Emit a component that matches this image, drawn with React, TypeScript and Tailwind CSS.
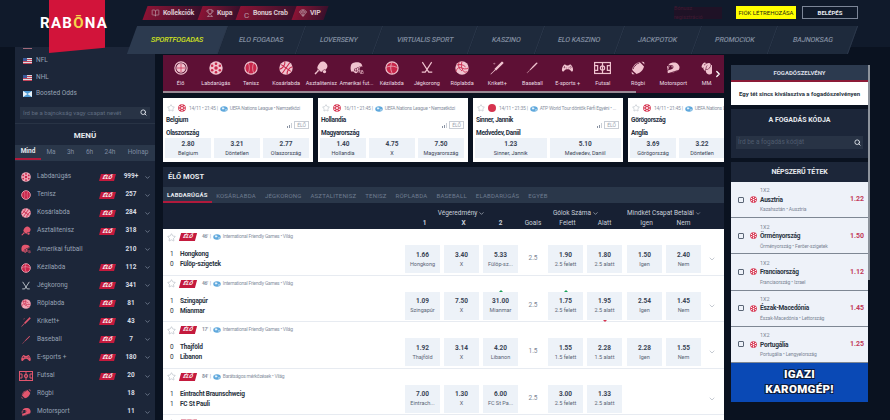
import React from 'react';
import { Search, ChevronDown, ChevronRight, Star, BookOpen, Trophy, Gem } from 'lucide-react';
import {
  GiPingPongBat,
  GiAmericanFootballHelmet,
  GiCricketBat,
  GiBaseballBat,
  GiGamepad,
  GiAmericanFootballBall,
  GiFullMotorcycleHelmet,
  GiBoxingGlove,
} from 'react-icons/gi';

type IconProps = { className?: string; pattern?: string };

const SoccerIcon = ({ className, pattern = '#c8264a' }: IconProps) => (
  <svg viewBox="0 0 24 24" className={className}>
    <circle cx="12" cy="12" r="11.5" fill="currentColor" />
    <g fill={pattern}>
      <circle cx="12" cy="12" r="3" />
      <circle cx="12" cy="4.6" r="2.2" />
      <circle cx="12" cy="19.4" r="2.2" />
      <circle cx="5.4" cy="8.2" r="2.2" />
      <circle cx="18.6" cy="8.2" r="2.2" />
      <circle cx="5.4" cy="15.8" r="2.2" />
      <circle cx="18.6" cy="15.8" r="2.2" />
    </g>
  </svg>
);

const TennisIcon = ({ className, pattern = '#c8264a' }: IconProps) => (
  <svg viewBox="0 0 24 24" className={className}>
    <circle cx="12" cy="12" r="10.5" fill={pattern} stroke="currentColor" strokeWidth="2" />
    <path d="M7 3c3 5 3 13 0 18M17 3c-3 5-3 13 0 18" fill="none" stroke="currentColor" strokeWidth="1" />
  </svg>
);

const BasketIcon = ({ className, pattern = '#c8264a' }: IconProps) => (
  <svg viewBox="0 0 24 24" className={className}>
    <circle cx="12" cy="12" r="11.5" fill="currentColor" />
    <path d="M2 12h20M12 1v22M4 4c4 4 4 12 0 16M20 4c-4 4-4 12 0 16" fill="none" stroke={pattern} strokeWidth="1.8" transform="rotate(35 12 12)" />
  </svg>
);

const HandIcon = ({ className, pattern = '#c8264a' }: IconProps) => (
  <svg viewBox="0 0 24 24" className={className}>
    <circle cx="12" cy="12" r="10.5" fill={pattern} stroke="currentColor" strokeWidth="2" />
    <path d="M2 11c6-3 14-3 20 1M12 2c-3 6-3 14 1 20" fill="none" stroke="currentColor" strokeWidth="1.2" />
  </svg>
);

const VolleyIcon = ({ className, pattern = '#c8264a' }: IconProps) => (
  <svg viewBox="0 0 24 24" className={className}>
    <circle cx="12" cy="12" r="11.5" fill="currentColor" />
    <path d="M12 1c-2 6-1 10 0 11s6 3 11 0M12 12c-5-2-9 0-10 6M12 12c1 5 4 9 9 6M7 2c-2 6 0 12 5 15M3 7c5-2 11-1 15 3" fill="none" stroke={pattern} strokeWidth="1.5" />
  </svg>
);

const HockeyIcon = ({ className }: IconProps) => (
  <svg viewBox="0 0 24 24" className={className} fill="none" stroke="currentColor" strokeWidth="2">
    <path d="M4 2l11 17h6M20 2L9 19H3" />
  </svg>
);

const FieldIcon = ({ className }: IconProps) => (
  <svg viewBox="0 0 28 20" className={className} fill="none" stroke="currentColor" strokeWidth="2">
    <rect x="1" y="1" width="26" height="18" />
    <path d="M14 1v18M1 6h5v8H1M27 6h-5v8h5" />
    <circle cx="14" cy="10" r="3.5" />
  </svg>
);

const LiveIcon = ({ className }: IconProps) => (
  <svg viewBox="0 0 24 24" className={className} fill="none" stroke="currentColor" strokeWidth="2">
    <circle cx="12" cy="12" r="10.5" />
    <circle cx="12" cy="12" r="7" fill="currentColor" />
    <path d="M5 12h14M12 5v14" stroke="#c8264a" strokeWidth="1.2" />
  </svg>
);

const icons: Record<string, React.ComponentType<IconProps>> = {
  live: LiveIcon,
  soccer: SoccerIcon,
  tennis: TennisIcon,
  basket: BasketIcon,
  table: GiPingPongBat,
  helmet: GiAmericanFootballHelmet,
  hand: HandIcon,
  hockey: HockeyIcon,
  volley: VolleyIcon,
  cricket: GiCricketBat,
  baseball: GiBaseballBat,
  esports: GiGamepad,
  field: FieldIcon,
  rugby: GiAmericanFootballBall,
  motor: GiFullMotorcycleHelmet,
  mma: GiBoxingGlove,
};

const stripSports = [
  ['Élő', 'live'],
  ['Labdarúgás', 'soccer'],
  ['Tenisz', 'tennis'],
  ['Kosárlabda', 'basket'],
  ['Asztalitenisz', 'table'],
  ['Amerikai fut...', 'helmet'],
  ['Kézilabda', 'hand'],
  ['Jégkorong', 'hockey'],
  ['Röplabda', 'volley'],
  ['Krikett+', 'cricket'],
  ['Baseball', 'baseball'],
  ['E-sports +', 'esports'],
  ['Futsal', 'field'],
  ['Rögbi', 'rugby'],
  ['Motorsport', 'motor'],
  ['MMA', 'mma'],
];

const menuSports = [
  { name: 'Labdarúgás', icon: 'soccer', live: true, count: '999+' },
  { name: 'Tenisz', icon: 'tennis', live: true, count: '257' },
  { name: 'Kosárlabda', icon: 'basket', live: true, count: '284' },
  { name: 'Asztalitenisz', icon: 'table', live: true, count: '318' },
  { name: 'Amerikai futball', icon: 'helmet', live: false, count: '210' },
  { name: 'Kézilabda', icon: 'hand', live: true, count: '112' },
  { name: 'Jégkorong', icon: 'hockey', live: true, count: '341' },
  { name: 'Röplabda', icon: 'volley', live: true, count: '81' },
  { name: 'Krikett+', icon: 'cricket', live: true, count: '43' },
  { name: 'Baseball', icon: 'baseball', live: true, count: '7' },
  { name: 'E-sports +', icon: 'esports', live: true, count: '180' },
  { name: 'Futsal', icon: 'field', live: true, count: '20' },
  { name: 'Rögbi', icon: 'rugby', live: false, count: '18' },
  { name: 'Motorsport', icon: 'motor', live: false, count: '11' },
];

const navTabs = [
  { label: 'SPORTFOGADAS', width: 'w-[91px]' },
  { label: 'ELO FOGADAS', width: 'w-[78px]' },
  { label: 'LOVERSENY', width: 'w-[77px]' },
  { label: 'VIRTUALIS SPORT', width: 'w-[95px]' },
  { label: 'KASZINO', width: 'w-[67px]' },
  { label: 'ELO KASZINO', width: 'w-[80px]' },
  { label: 'JACKPOTOK', width: 'w-[77px]' },
  { label: 'PROMOCIOK', width: 'w-[76px]' },
  { label: 'BAJNOKSAG', width: 'w-[80px]' },
];

const featured = [
  {
    sport: 'soccer',
    meta: '14/11 • 21:45 | ',
    league: 'UEFA Nations League • Nemzetközi',
    teams: ['Belgium', 'Olaszország'],
    odds: [['2.80', 'Belgium'], ['3.21', 'Döntetlen'], ['2.77', 'Olaszország']],
  },
  {
    sport: 'soccer',
    meta: '16/11 • 21:45 | ',
    league: 'UEFA Nations League • Nemzetközi',
    teams: ['Hollandia', 'Magyarország'],
    odds: [['1.40', 'Hollandia'], ['4.75', 'X'], ['7.50', 'Magyarország']],
  },
  {
    sport: 'tennis',
    meta: '14/11 • 21:35 | ',
    league: 'ATP World Tour döntők Férfi Egyéni • ...',
    teams: ['Sinner, Jannik', 'Medvedev, Daniil'],
    odds: [['1.23', 'Sinner, Jannik'], ['5.10', 'Medvedev, Daniil']],
  },
  {
    sport: 'soccer',
    meta: '14/11 • 21:45 | ',
    league: 'UEFA Nations League',
    teams: ['Görögország', 'Anglia'],
    odds: [['3.69', 'Görögország'], ['3.22', 'Döntetlen']],
  },
];

const liveTabs = ['LABDARÚGÁS', 'KOSÁRLABDA', 'JÉGKORONG', 'ASZTALITENISZ', 'TENISZ', 'RÖPLABDA', 'BASEBALL', 'ELABDARÚGÁS', 'EGYÉB'];

type Odd = { value: string; label: string; up?: boolean; down?: boolean };
type Match = {
  minute: string;
  league: string;
  home: [string, string];
  away: [string, string];
  result: Odd[];
  goals: string;
  total: Odd[];
  both: Odd[];
};

const matches: Match[] = [
  {
    minute: "46'",
    league: 'International Friendly Games • Világ',
    home: ['1', 'Hongkong'],
    away: ['0', 'Fülöp-szigetek'],
    result: [{ value: '1.66', label: 'Hongkong' }, { value: '3.40', label: 'X' }, { value: '5.33', label: 'Fülöp-sz...' }],
    goals: '2.5',
    total: [{ value: '1.90', label: '2.5 felett' }, { value: '1.80', label: '2.5 alatt' }],
    both: [{ value: '1.50', label: 'Igen' }, { value: '2.40', label: 'Nem' }],
  },
  {
    minute: "46'",
    league: 'International Friendly Games • Világ',
    home: ['1', 'Szingapúr'],
    away: ['0', 'Mianmar'],
    result: [{ value: '1.09', label: 'Szingapúr' }, { value: '7.50', label: 'X' }, { value: '31.00', label: 'Mianmar', up: true }],
    goals: '2.5',
    total: [{ value: '1.75', label: '2.5 felett', up: true }, { value: '1.95', label: '2.5 alatt', down: true }],
    both: [{ value: '2.54', label: 'Igen' }, { value: '1.45', label: 'Nem' }],
  },
  {
    minute: "17'",
    league: 'International Friendly Games • Világ',
    home: ['0', 'Thajföld'],
    away: ['0', 'Libanon'],
    result: [{ value: '1.92', label: 'Thajföld' }, { value: '3.14', label: 'X' }, { value: '4.20', label: 'Libanon' }],
    goals: '1.5',
    total: [{ value: '1.55', label: '1.5 felett' }, { value: '2.28', label: '1.5 alatt' }],
    both: [{ value: '2.28', label: 'Igen' }, { value: '1.55', label: 'Nem' }],
  },
  {
    minute: "84'",
    league: 'Barátságos mérkőzések • Világ',
    home: ['1', 'Eintracht Braunschweig'],
    away: ['1', 'FC St Pauli'],
    result: [{ value: '7.00', label: 'Eintrach...' }, { value: '1.30', label: 'X' }, { value: '6.00', label: 'FC St Pa...' }],
    goals: '2.5',
    total: [{ value: '3.00', label: '2.5 felett' }, { value: '1.33', label: '2.5 alatt' }],
    both: [],
  },
];

const popular = [
  { name: 'Ausztria', sub: 'Kazahsztán • Ausztria', odd: '1.22' },
  { name: 'Örményország', sub: 'Örményország • Feröer-szigetek', odd: '1.50' },
  { name: 'Franciaország', sub: 'Franciaország • Izrael', odd: '1.12' },
  { name: 'Észak-Macedónia', sub: 'Észak-Macedónia • Lettország', odd: '1.45' },
  { name: 'Portugália', sub: 'Portugália • Lengyelország', odd: '1.25' },
];

const LiveBadge = ({ className }: { className?: string }) => (
  <span className={`flex h-[7px] w-[15px] -skew-x-[15deg] items-center justify-center bg-[#c41a3d] text-[5.5px] font-bold italic leading-none text-white ${className ?? ''}`}>
    ÉLŐ
  </span>
);

const Globe = () => (
  <svg viewBox="0 0 16 12" className="h-[6px] w-[8px] shrink-0">
    <ellipse cx="8" cy="6" rx="7.5" ry="5.5" fill="#5fa8dc" />
    <path d="M3 3h5l1 3-4 1zM10 7h4l-2 3z" fill="#e8f2fa" />
  </svg>
);

const FlagUs = () => (
  <svg viewBox="0 0 18 12" className="h-[6px] w-[9px] shrink-0">
    <rect width="18" height="12" fill="#d9dde3" />
    <path d="M0 2h18v2H0zM0 6h18v2H0zM0 10h18v2H0z" fill="#c2455a" />
    <rect width="8" height="6" fill="#3b5a9a" />
  </svg>
);

const FlagBoost = () => (
  <svg viewBox="0 0 18 12" className="h-[6px] w-[9px] shrink-0">
    <rect width="18" height="12" fill="#4f9bd6" />
    <path d="M0 0l9 6-9 6zM18 0L9 6l9 6z" fill="#e8f2fa" />
  </svg>
);

const SidebarRow = ({ name, icon, live, count }: (typeof menuSports)[number]) => {
  const Icon = icons[icon];
  const wide = icon === 'field' || icon === 'esports';
  const balls = ['soccer', 'tennis', 'basket', 'hand', 'volley'];
  const color = icon === 'hockey' ? 'text-[#d3d8df]' : balls.includes(icon) ? 'text-[#f0a8b8]' : 'text-[#e2566e]';
  return (
    <div className="flex h-[18.1px] items-center">
      <div className="flex w-[22px] justify-center">
        <Icon className={`${wide ? 'h-[12px] w-[14px]' : 'h-[10px] w-[10px]'} ${color}`} />
      </div>
      <span className="flex-1 text-[6.5px] text-[#98a3b5]">{name}</span>
      {live && <LiveBadge className="mr-[1px]" />}
      <span className="w-[28px] pl-[2px] text-center text-[6.5px] font-bold text-[#d9dde4]">{count}</span>
      <ChevronDown className="mr-[4px] h-[7px] w-[7px] text-[#9aa5b8]" />
    </div>
  );
};

const Sidebar = () => (
  <aside className="ml-[15px] w-[140px] shrink-0 bg-[#1c2639] pt-[4px]">
    <div className="-mt-[3px] mb-[4px] ml-[8px] h-[1px] w-[9px] bg-[#a06a7a]" />
    {[
      ['NFL', <FlagUs key="a" />],
      ['NHL', <FlagUs key="b" />],
      ['Boosted Odds', <FlagBoost key="c" />],
    ].map(([name, flag], i) => (
      <div key={i} className="flex h-[16.5px] items-center gap-[4px] pl-[8px] text-[6.5px] text-[#98a3b5]">
        {flag}
        <span>{name}</span>
      </div>
    ))}
    <div className="px-[5px] pt-[4px]">
      <div className="flex h-[12.5px] items-center justify-between bg-[#283345] pl-[3px] pr-[3px]">
        <span className="text-[6px] text-[#5f6c80]">Írd be a bajnokság vagy csapat nevét</span>
        <Search className="h-[7px] w-[7px] text-[#e4e8ee]" strokeWidth={3} />
      </div>
    </div>
    <div className="mt-[4px] border-t border-[#283345] pt-[5px] text-center text-[8px] font-bold leading-[14px] text-[#e6e9ee]">MENÜ</div>
    <div className="mt-[2px] flex h-[16px] border-b border-transparent bg-[#2a374a] text-[6.5px] text-[#7f8ba0]">
      <span className="flex w-[26px] items-center justify-center border-b-2 border-[#b01a3c] font-bold text-[#e6e9ee]">Mind</span>
      <span className="flex w-[20px] items-center justify-center">Ma</span>
      <span className="flex w-[19px] items-center justify-center">3h</span>
      <span className="flex w-[19px] items-center justify-center">6h</span>
      <span className="flex w-[22px] items-center justify-center">24h</span>
      <span className="flex flex-1 items-center justify-center">Holnap</span>
    </div>
    <div className="pt-[7px]">
      {menuSports.map((s) => (
        <SidebarRow key={s.name} {...s} />
      ))}
    </div>
  </aside>
);

const Header = () => (
  <header className="relative z-10 h-[55px]">
    <div className="absolute left-[49px] top-0 h-[53px] w-[56px] bg-[#d2143a] [clip-path:polygon(0_0,100%_0,100%_90%,0_100%)]" />
    <div className="absolute left-[40px] top-[14px] text-[15px] font-bold leading-[18px] tracking-[1.3px] text-white">
      RAB<span className="text-[#f4d44a]">Ō</span>NA
    </div>
    <div className="flex h-[26px] items-center pl-[145px] pb-[1px]">
      {[
        { label: 'Kollekciók', icon: <BookOpen className="h-[8px] w-[9px]" />, width: 'w-[55px]' },
        { label: 'Kupa', icon: <Trophy className="h-[8px] w-[8px]" />, width: 'w-[38px]' },
        { label: 'Bonus Crab', icon: <span className="text-[8px] leading-none">C</span>, width: 'w-[56px]' },
        { label: 'VIP', icon: <Gem className="h-[8px] w-[8px]" />, width: 'w-[32px]' },
      ].map((l) => (
        <div key={l.label} className={`flex h-[14px] ${l.width} -skew-x-[20deg] items-center justify-center gap-[3px] bg-gradient-to-r from-[#8b1234] to-[#3b0f2b] text-[#d9c7cf]`}>
          <span className="skew-x-[20deg] text-[#b99aa6]">{l.icon}</span>
          <span className="skew-x-[20deg] text-[7px] font-bold tracking-[-0.15px]">{l.label}</span>
        </div>
      ))}
      <div className="ml-auto flex items-center pr-[32px]">
        <div className="mr-[14px] flex h-[12px] w-[48px] items-center justify-center bg-[#1f1226] text-[5.5px] text-[#3f1b33]">Bónusz regisztráció</div>
        <div className="mr-[6px] flex h-[13px] w-[60px] items-center justify-center bg-[#ffff00] text-[6px] text-[#2a2a10]">FIÓK LÉTREHOZÁSA</div>
        <div className="flex h-[13px] w-[56px] items-center justify-center border border-[#7c8698] text-[6px] font-bold text-[#e6e9ee]">BELÉPÉS</div>
      </div>
    </div>
    <nav className="flex h-[28px] pl-[132px]">
      {navTabs.map((t, i) => (
        <div
          key={t.label}
          className={`flex ${t.width} -skew-x-[20deg] items-center justify-center border-r border-[#2c384b] ${i === 0 ? 'bg-[#2c3a4f]' : 'bg-[#1e2a3c]'}`}
        >
          <span className={`inline-block skew-x-[8deg] text-[7px] font-medium tracking-[-0.1px] ${i === 0 ? 'text-[#cfe01f]' : 'text-[#808c9f]'}`}>{t.label}</span>
        </div>
      ))}
    </nav>
  </header>
);

const SportStrip = () => (
  <div className="relative flex h-[38px] bg-[#5e1035]">
    {stripSports.map(([label, icon]) => {
      const Icon = icons[icon];
      const wide = icon === 'field' || icon === 'esports';
      return (
        <div key={label} className="flex w-[35.2px] shrink-0 flex-col items-center pt-[5px]">
          <div className="flex h-[16px] items-center">
            <Icon className={`${wide ? 'h-[14px] w-[17px]' : 'h-[14px] w-[14px]'} text-[#f0c3cf]`} />
          </div>
          <span className="mt-[3px] whitespace-nowrap text-[5.5px] leading-[8px] text-[#eadde3]">{label}</span>
        </div>
      );
    })}
    <div className="absolute bottom-0 left-0 h-[2px] w-[473px] bg-[#9a8a96]" />
    <div className="absolute bottom-0 right-0 top-0 flex w-[12px] items-center justify-center bg-[#5e1035]">
      <ChevronRight className="h-[10px] w-[10px] text-white" strokeWidth={3} />
    </div>
  </div>
);

const FeaturedCard = ({ sport, meta, league, teams, odds }: (typeof featured)[number]) => (
  <div className="h-[64px] w-[150px] shrink-0 bg-white px-[2px]">
    <div className="flex h-[16px] items-end gap-[2px] overflow-hidden pb-[2px] pl-[2px] whitespace-nowrap text-[5px] tracking-[-0.25px] text-[#8a93a3]">
      <Star className="h-[8px] w-[8px] shrink-0 text-[#a9b0bb]" strokeWidth={1.5} />
      {sport === 'tennis' ? (
        <span className="ml-[1px] h-[8px] w-[8px] shrink-0 rounded-full bg-[#d6334f]" />
      ) : (
        <SoccerIcon className="ml-[1px] h-[8px] w-[8px] shrink-0 text-[#d6334f]" pattern="#ffffff" />
      )}
      <span className="ml-[1px]">{meta}</span>
      <Globe />
      <span>{league}</span>
    </div>
    <div className="relative h-[24px] pl-[1px] text-[6.5px] font-bold leading-[12.5px] tracking-[-0.3px] text-[#26303f]">
      <div>{teams[0]}</div>
      <div>{teams[1]}</div>
      <div className="absolute right-[2px] top-[7px] flex items-center gap-[2px] tracking-normal">
        <span className="flex items-end gap-[1px]">
          <span className="h-[2px] w-[1px] bg-[#8a93a3]" />
          <span className="h-[3px] w-[1px] bg-[#8a93a3]" />
          <span className="h-[5px] w-[1px] bg-[#c9ced6]" />
        </span>
        <span className="border border-[#c9ced6] px-[2px] text-[5px] font-normal leading-[6px] text-[#9aa3b0]">ÉLŐ</span>
      </div>
    </div>
    <div className="flex gap-[3px]">
      {odds.map(([value, label]) => (
        <div key={label} className={`flex h-[20px] ${sport === 'tennis' ? 'flex-1' : 'w-[46px]'} flex-col items-center justify-center bg-[#edf2f8] text-[#3a4556]`}>
          <span className="text-[6.5px] font-bold leading-[9px]">{value}</span>
          <span className="text-[5.5px] leading-[8px]">{label}</span>
        </div>
      ))}
    </div>
  </div>
);

const OddCell = ({ value, label, up, down }: Odd) => (
  <div className="relative flex h-[28px] w-[35px] shrink-0 flex-col items-center justify-center bg-[#edf2f8] text-[#3a4556]">
    {up && <span className="absolute -top-[2px] h-0 w-0 border-x-[2px] border-b-[2px] border-x-transparent border-b-[#17a05a]" />}
    <span className="text-[6.5px] font-bold leading-[9px]">{value}</span>
    <span className="text-[5.5px] leading-[8px] text-[#5b6676]">{label}</span>
    {down && <span className="absolute -bottom-[2px] h-0 w-0 border-x-[2px] border-t-[2px] border-x-transparent border-t-[#d6334f]" />}
  </div>
);

const MatchRow = ({ match }: { match: Match }) => (
  <div className="h-[46.5px] border-b border-[#e7ebf1] bg-white">
    <div className="flex h-[16px] items-center gap-[2px] pl-[4px] text-[5px] tracking-[-0.25px] text-[#8a93a3]">
      <Star className="h-[9px] w-[9px] text-[#a9b0bb]" strokeWidth={1.5} />
      <LiveBadge className="ml-[2px] h-[8px] w-[16px] tracking-normal" />
      <span className="ml-[4px] font-bold">{match.minute}</span>
      <span>|</span>
      <Globe />
      <span>{match.league}</span>
    </div>
    <div className="flex items-center">
      <div className="w-[242px] shrink-0 pl-[7px] text-[6.5px] font-bold leading-[10px] tracking-[-0.2px] text-[#2a3442]">
        {[match.home, match.away].map(([score, team]) => (
          <div key={team} className="flex">
            <span className="w-[10px] font-normal">{score}</span>
            <span>{team}</span>
          </div>
        ))}
      </div>
      <div className="flex gap-[4px]">
        {match.result.map((o) => (
          <OddCell key={o.label + o.value} {...o} />
        ))}
      </div>
      <span className="w-[30px] text-center text-[6.5px] text-[#7c8696]">{match.goals}</span>
      <div className="flex gap-[4px]">
        {match.total.map((o) => (
          <OddCell key={o.label} {...o} />
        ))}
      </div>
      <div className="ml-[5px] flex w-[74px] gap-[4px]">
        {match.both.map((o) => (
          <OddCell key={o.label} {...o} />
        ))}
      </div>
      <ChevronDown className="ml-[7px] h-[8px] w-[8px] text-[#a9b0bb]" />
    </div>
  </div>
);

const ColumnHeader = () => (
  <div className="h-[26px] bg-[#172033] pl-[242px] pt-[5px] text-[6.5px] leading-[10px] text-[#c8cfd9]">
    <div className="flex">
      <span className="flex w-[113px] items-center justify-center gap-[1px]">Végeredmény <ChevronDown className="h-[7px] w-[7px]" /></span>
      <span className="flex w-[104px] items-center justify-center gap-[1px] pl-[12px]">Gólok Száma <ChevronDown className="h-[7px] w-[7px]" /></span>
      <span className="flex w-[79px] items-center justify-center gap-[1px] whitespace-nowrap pl-[5px]">Mindkét Csapat Betalál <ChevronDown className="h-[7px] w-[7px]" /></span>
    </div>
    <div className="flex font-bold">
      <span className="w-[39px] text-center">1</span>
      <span className="w-[39px] text-center">X</span>
      <span className="w-[35px] text-center">2</span>
      <span className="w-[30px] text-center font-normal">Goals</span>
      <span className="w-[39px] text-center font-normal">Felett</span>
      <span className="w-[35px] text-center font-normal">Alatt</span>
      <span className="ml-[5px] w-[39px] text-center font-normal">Igen</span>
      <span className="w-[35px] text-center font-normal">Nem</span>
    </div>
  </div>
);

const LiveSection = () => (
  <section className="mt-[5px]">
    <div className="flex h-[20px] items-center bg-[#1c2639] pl-[5px] text-[7.5px] font-bold text-[#e6e9ee]">ÉLŐ MOST</div>
    <div className="flex h-[16px] bg-[#2a374a] text-[6px] tracking-[0.2px] text-[#6f7c90]">
      {liveTabs.map((t, i) => (
        <span
          key={t}
          className={`flex items-center ${i === 0 ? 'border-b-2 border-[#b01a3c] px-[4px] font-bold text-[#e6e9ee]' : 'px-[4.5px]'}`}
        >
          {t}
        </span>
      ))}
    </div>
    <ColumnHeader />
    {matches.map((m) => (
      <MatchRow key={m.home[1]} match={m} />
    ))}
    <div className="flex h-[16px] items-center gap-[3px] bg-white pl-[4px]">
      <Star className="h-[9px] w-[9px] text-[#a9b0bb]" strokeWidth={1.5} />
      <LiveBadge className="ml-[1px] h-[8px] w-[16px] opacity-40" />
    </div>
  </section>
);

const BetSlip = () => (
  <aside className="mt-[10px] flex w-[139px] shrink-0 self-start">
    <div className="w-[137px]">
      <div className="flex h-[17px] items-center justify-center border-b-2 border-[#8c1a36] bg-[#2c3a4f] text-[6px] font-bold text-[#d9dde4]">FOGADÓSZELVÉNY</div>
      <div className="flex h-[23px] items-center justify-center whitespace-nowrap bg-white text-[6px] font-bold text-[#2a3442]">Egy tét sincs kiválasztva a fogadószelvényen</div>
      <div className="mt-[4px] h-[49px] bg-[#1c2639] px-[5px]">
        <div className="pt-[6px] text-center text-[7px] font-bold leading-[10px] text-[#e6e9ee]">A FOGADÁS KÓDJA</div>
        <div className="mt-[11px] flex h-[13px] items-center justify-between bg-[#283345] px-[2px]">
          <span className="text-[6.5px] text-[#4f5b6e]">Írd be a fogadás kódját</span>
          <Search className="h-[7px] w-[7px] text-[#e4e8ee]" strokeWidth={3} />
        </div>
      </div>
      <div className="mt-[4px] flex h-[20px] items-center justify-center bg-[#1c2639] text-[7px] font-bold tracking-[-0.1px] text-[#e6e9ee]">NÉPSZERŰ TÉTEK</div>
      {popular.map((p) => (
        <div key={p.name} className="flex h-[36.2px] items-center border-b border-[#7e8794] bg-[#eef2f9] pl-[7px] pr-[4px]">
          <span className="h-[6px] w-[6px] shrink-0 rounded-[1px] border border-[#5b6676]" />
          <SoccerIcon className="ml-[6px] h-[7px] w-[7px] shrink-0 text-[#d6334f]" pattern="#ffffff" />
          <div className="ml-[3px] flex-1 pt-[2px] leading-[9.5px]">
            <div className="text-[5.5px] text-[#7c8696]">1X2</div>
            <div className="text-[6.5px] font-bold tracking-[-0.2px] text-[#2a3442]">{p.name}</div>
            <div className="text-[5px] tracking-[-0.1px] text-[#7c8696]">{p.sub}</div>
          </div>
          <span className="text-[7px] font-bold text-[#c23a5a]">{p.odd}</span>
        </div>
      ))}
      <div className="flex h-[39px] flex-col items-center justify-center bg-[#0a49b5] text-[11.5px] font-black leading-[15px] tracking-[0.3px] text-white [text-shadow:1px_1px_0_#0b1a3a,-1px_-1px_0_#0b1a3a,1px_-1px_0_#0b1a3a,-1px_1px_0_#0b1a3a]">
        <span>IGAZI</span>
        <span>KAROMGÉP!</span>
      </div>
    </div>
    <div className="h-[215px] w-[2px] bg-[#8d939c]" />
  </aside>
);

export default function App() {
  return (
    <div className="h-screen w-full overflow-hidden bg-[linear-gradient(#101a2b_47px,#0a1220_47px)] font-[Roboto,sans-serif]">
      <Header />
      <div className="-mt-[8px] flex">
        <Sidebar />
        <main className="ml-[8px] mt-[8px] w-[561px] shrink-0 overflow-hidden">
          <SportStrip />
          <div className="mt-[5px] flex gap-[5px]">
            {featured.map((c) => (
              <FeaturedCard key={c.teams[0]} {...c} />
            ))}
          </div>
          <LiveSection />
        </main>
        <div className="ml-[7px] mt-[8px]">
          <BetSlip />
        </div>
      </div>
    </div>
  );
}
